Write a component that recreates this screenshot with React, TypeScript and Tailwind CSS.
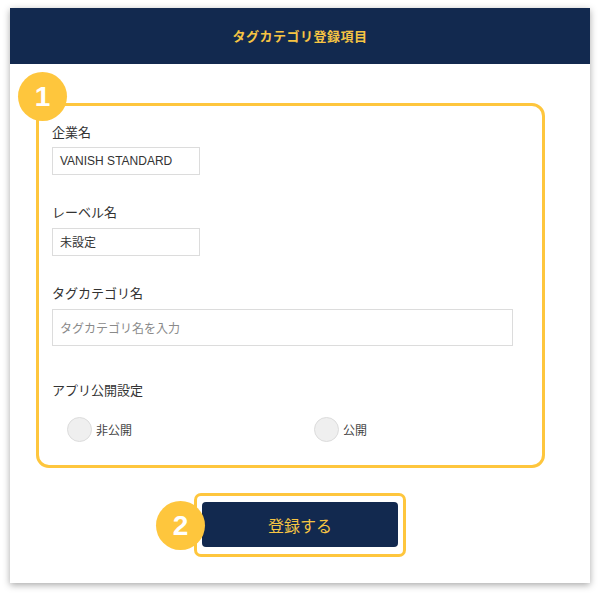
import React from "react";

const jp = "font-['Noto_Sans_CJK_JP','Noto_Sans',sans-serif]";

function StepBadge({ n, className }: { n: number; className: string }) {
  return (
    <div
      className={`absolute w-[49px] h-[49px] rounded-full bg-[#fec63d] flex items-center justify-center text-white text-[28px] font-bold font-['Liberation_Sans',sans-serif] leading-none ${className}`}
    >
      {n}
    </div>
  );
}

function Label({ children }: { children: React.ReactNode }) {
  return <div className={`${jp} text-[13px] leading-[18px] text-[#333]`}>{children}</div>;
}

function Radio({ label }: { label: string }) {
  return (
    <label className="flex items-center gap-[4px]">
      <span className="w-[25px] h-[25px] rounded-full bg-[#efefef] border border-[#dcdcdc]" />
      <span className={`${jp} text-[12px] leading-[16px] text-[#444]`}>{label}</span>
    </label>
  );
}

export default function App() {
  return (
    <div className="w-[600px] h-[596px] bg-white pt-[8px] pl-[10px]">
      <div className="w-[580px] h-[575px] bg-white shadow-[0_2px_7px_rgba(0,0,0,0.35)] flex flex-col">
        <header className="h-[56px] bg-[#12294f] flex items-center justify-center">
          <h1 className={`${jp} text-[13px] font-bold text-[#f6c443] tracking-[0.5px]`}>
            タグカテゴリ登録項目
          </h1>
        </header>

        <section className="relative ml-[26px] mt-[39px] w-[509px] h-[365px] border-[3px] border-[#fec63d] rounded-[13px] pl-[13px] pr-[13px] pt-[17px]">
          <StepBadge n={1} className="-left-[21px] -top-[34px]" />

          <Label>企業名</Label>
          <div className="mt-[6px] w-[148px] h-[28px] border border-[#dcdcdc] flex items-center pl-[7px] font-['Liberation_Sans',sans-serif] text-[12px] text-[#333]">
            VANISH STANDARD
          </div>

          <div className="mt-[28px]">
            <Label>レーベル名</Label>
          </div>
          <div className={`mt-[7px] w-[148px] h-[28px] border border-[#dcdcdc] flex items-center pl-[7px] ${jp} text-[12px] text-[#333]`}>
            未設定
          </div>

          <div className="mt-[28px]">
            <Label>タグカテゴリ名</Label>
          </div>
          <input
            readOnly
            placeholder="タグカテゴリ名を入力"
            className={`mt-[7px] w-[461px] h-[37px] border border-[#dcdcdc] pl-[7px] ${jp} text-[12px] text-[#333] placeholder:text-[#8a8a8a] outline-none`}
          />

          <div className="mt-[35px]">
            <Label>アプリ公開設定</Label>
          </div>
          <div className="mt-[18px] grid grid-cols-[262px_1fr]">
            <div className="pl-[15px]">
              <Radio label="非公開" />
            </div>
            <div>
              <Radio label="公開" />
            </div>
          </div>
        </section>

        <div className="mt-[25px] flex justify-center">
          <div className="relative w-[212px] h-[64px] border-[3px] border-[#fec63d] rounded-[7px] px-[5px] pt-[6px]">
            <button className={`w-full h-[45px] rounded-[4px] bg-[#12294f] ${jp} text-[16px] text-[#f6c443]`}>
              登録する
            </button>
            <StepBadge n={2} className="-left-[41px] top-[5px]" />
          </div>
        </div>
      </div>
    </div>
  );
}
